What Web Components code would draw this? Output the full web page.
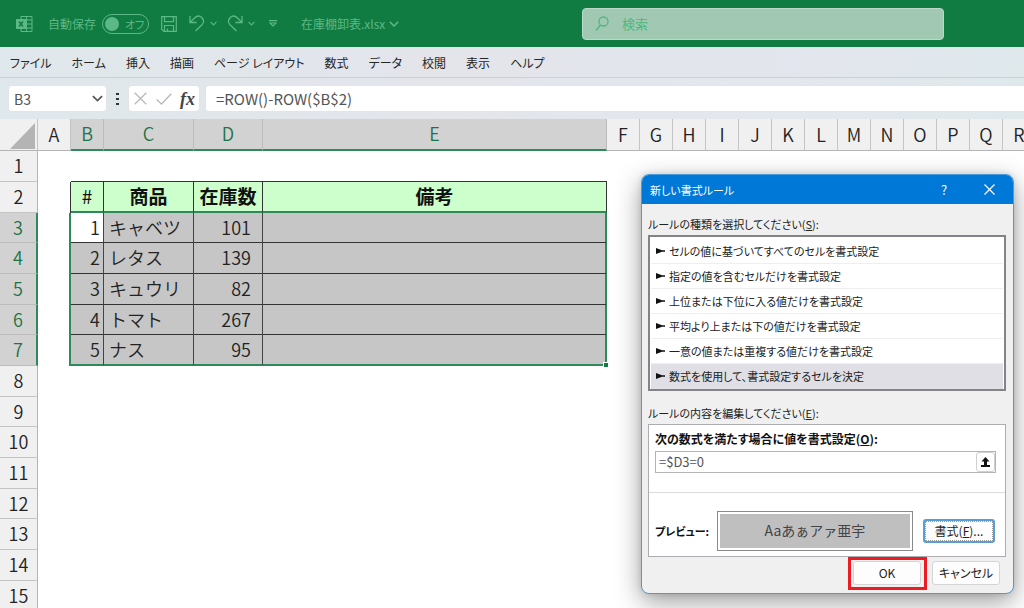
<!DOCTYPE html>
<html lang="ja">
<head>
<meta charset="utf-8">
<title>在庫棚卸表.xlsx</title>
<style>
html,body{margin:0;height:100%;overflow:hidden;background:#fff}
body{font-family:"Noto Sans CJK JP","Noto Sans",sans-serif;font-size:12px;color:#222}
</style>
</head>
<body>
<excel-app></excel-app>
<script>
const base = `*{box-sizing:border-box}
button,input{font:inherit;color:inherit;margin:0;padding:0;border:0;background:none;outline:0}
button{display:flex;align-items:center;justify-content:center}
svg{display:block;fill:none;stroke:currentColor;flex:none}`;

function define(name, css, html) {
  customElements.define(name, class extends HTMLElement {
    constructor() {
      super();
      const t = document.createElement('template');
      t.innerHTML = `<style>${base}${css}</style>${typeof html === 'function' ? html(this) : html}`;
      this.attachShadow({mode: 'open'}).append(t.content.cloneNode(true));
    }
  });
}
const chevron = (w, h) => `<svg width="${w}" height="${h}" viewBox="0 0 10 6" stroke-width="1.5"><path d="M.8.8 5 5 9.2.8"/></svg>`;

define('title-bar', `
:host{display:flex;align-items:center;height:47px;padding:0 80px 0 16px;background:#107c41;color:#5cb886;font-size:12px;font-feature-settings:"palt"}
.left{flex:1;display:flex;align-items:center;white-space:nowrap}
.app{margin-right:15px}
.auto{display:flex;align-items:center;gap:6px;margin-right:12px}
.switch{width:47px;height:20px;border:1px solid currentColor;border-radius:10px;justify-content:flex-start;gap:6px;padding-left:2px;font-size:11px}
.switch i{width:14px;height:14px;border-radius:50%;background:currentColor}
.undo,.redo{gap:5px;margin-left:12px}
.redo{margin-left:10px}
.custom{margin:0 24px 0 14px}
.file{gap:4px}
.search{flex:0 1 362px;display:flex;align-items:center;gap:13px;height:32px;padding-left:12px;background:#a0c8b2;border:1px solid #bcd8c8;border-radius:4px;color:#4fb880}
.search input{flex:1;min-width:0;font-size:13px}
.search input::placeholder{color:inherit;opacity:1}
`, `
<div class="left">
<svg class="app" width="17" height="16" viewBox="0 0 17 16" stroke-width="1"><path d="M5 3.500V.5h11v15H5v-3M10.500.5v15M5 4h11M10 8h6M5 12h11"/><path fill="currentColor" d="M.5 3.500h9v9h-9z"/><path stroke="#107c41" stroke-width="1.500" d="m3 5.500 4 5M7 5.500l-4 5"/></svg>
<div class="auto"><span id="as">自動保存</span><button class="switch" role="switch" aria-checked="false" aria-labelledby="as"><i></i>オフ</button></div>
<button aria-label="上書き保存"><svg width="16" height="16" viewBox="0 0 16 16" stroke-width="1.200"><path d="M.7.7h14.600v14.600H2.800L.7 13.200zM3.500.7v5h9v-5M3.500 15.300V9.500h9v5.800M6.500 15v-2.500"/></svg></button>
<button class="undo" aria-label="元に戻す"><svg width="16" height="17" viewBox="0 0 16 17" stroke-width="1.300"><path d="M1 1v6.500h6.500M1.300 7.200 5.500 3C8 .6 11 .8 13 2.700c2 2 2 5 0 7L6.500 16"/></svg>${chevron(7,5)}</button>
<button class="redo" aria-label="やり直し"><svg width="16" height="17" viewBox="0 0 16 17" stroke-width="1.300"><path d="M15 1v6.500H8.500M14.700 7.200 10.500 3C8 .6 5 .8 3 2.700c-2 2-2 5 0 7L9.500 16"/></svg>${chevron(7,5)}</button>
<button class="custom" aria-label="クイック アクセス ツール バーのカスタマイズ"><svg width="8" height="7" viewBox="0 0 8 7" stroke-width="1.100"><path d="M0 .6h8M1 3l3 3 3-3z"/></svg></button>
<button class="file">在庫棚卸表.xlsx${chevron(10,6)}</button>
</div>
<label class="search"><svg width="14" height="16" viewBox="0 0 14 16" stroke-width="1.300"><circle cx="8.500" cy="5.500" r="4.500"/><path d="M5.500 9 1 14.500"/></svg><input type="text" placeholder="検索" aria-label="検索"></label>`);

define('ribbon-tabs', `
:host{display:flex;align-items:center;gap:20px;height:31px;padding:0 10px;background:linear-gradient(90deg,#dfe8ec,#e3e5eb 40%,#e3e5ed 75%,#dfe9ec);border-bottom:1px solid #cbd0d5;font-size:12px;font-feature-settings:"palt";white-space:nowrap;color:#262626}
`, ['ファイル','ホーム','挿入','描画','ページ レイアウト','数式','データ','校閲','表示','ヘルプ'].map(t => `<button>${t}</button>`).join(''));

define('formula-bar', `
:host{display:flex;align-items:center;height:41px;padding:0 0 0 8px;background:linear-gradient(90deg,#dfe8ec,#e3e5eb 40%,#e3e7ee 75%,#dfe9ec);color:#555}
.box{display:flex;align-items:center;height:27px;background:#fff;border:1px solid #e2e4e6;border-radius:4px}
.name{width:99px;padding:0 3px 0 5px;font-size:14px}
.name input{flex:1;min-width:0}
.dots{margin:0 9px}
.fn{width:72px;padding:0 4px 0 5px;justify-content:space-between;color:#b8b8b8;margin-right:5px}
.fx{font:italic bold 18px/24px "Liberation Serif",serif;color:#444}
.formula{flex:1;padding-left:10px;border-right:0;border-radius:4px 0 0 4px;font-size:15px}
.formula input{flex:1}
`, `
<div class="box name"><input type="text" value="B3" aria-label="名前ボックス"><button aria-label="名前の一覧">${chevron(11,7)}</button></div>
<svg class="dots" width="3" height="12" viewBox="0 0 3 12" style="fill:#333;stroke:none"><path d="M0 0h3v2H0zM0 5h3v2H0zM0 10h3v2H0z"/></svg>
<div class="box fn">
<button aria-label="キャンセル"><svg width="13" height="13" viewBox="0 0 13 13" stroke-width="1.300"><path d="m.7.7 11.600 11.600M12.300.7.7 12.300"/></svg></button>
<button aria-label="入力"><svg width="16" height="12" viewBox="0 0 16 12" stroke-width="1.300"><path d="m.7 6.500 4.800 4.500L15.300.8"/></svg></button>
<button class="fx" aria-label="関数の挿入">fx</button></div>
<div class="box formula"><input type="text" value="=ROW()-ROW($B$2)" aria-label="数式バー"></div>`);

const cols = 'ABCDEFGHIJKLMNOPQR'.split('');
const heads = ['#','商品','在庫数','備考'];
const data = [[1,'キャベツ',101,''],[2,'レタス',139,''],[3,'キュウリ',82,''],[4,'トマト',267,''],[5,'ナス',95,'']];
function sheet() {
  let h = '<table><colgroup><col class="rh">' + cols.map(c => `<col class="c${c}">`).join('') + '</colgroup><thead><tr><th class="corner"><svg width="25" height="26" viewBox="0 0 25 26"><path fill="#b4b4b4" stroke="none" d="M25 0v26H0z"/></svg></th>';
  h += cols.map(c => `<th scope="col" class="${'BCDE'.includes(c) ? 'sel' : ''}">${c}</th>`).join('') + '</tr></thead><tbody>';
  for (let r = 1; r <= 15; r++) {
    const row = r === 2 ? heads : data[r - 3];
    h += `<tr class="${r === 2 ? 'head' : r > 2 && r < 8 ? 'data' : ''}${r === 1 ? 'top' : r === 7 ? ' last' : ''}"><th scope="row">${r}</th><td class="A"></td>`;
    if (row) h += row.map((v, i) => `<td class="${'BCDE'[i]}">${v}${r === 7 && i === 3 ? '<i></i>' : ''}</td>`).join('') + '<td colspan="13"></td>';
    else h += '<td class="E" colspan="4"></td><td colspan="13"></td>';
    h += '</tr>';
  }
  return h + '</tbody></table>';
}
define('work-sheet', `
:host{display:block;flex:1;min-height:0;overflow:hidden;background:#fff;font-size:18px;line-height:24px;color:#222}
table{table-layout:fixed;width:1036px;border-collapse:separate;border-spacing:0}
col{width:33px}.rh{width:38px}.cC{width:90px}.cD{width:69px}.cE{width:344px}
th,td{padding:0 0 2px;white-space:nowrap;font-weight:350}
th{background:#f0f0f0}
thead th{height:32px;border-right:1px solid #c4c4c4;border-bottom:1px solid #b4b4b4}
thead .sel{background:#d2d2d2;color:#217346;border-bottom:2px solid #2f8a5b;border-right-color:#bcbcbc}
thead .corner{padding:0}
.corner svg{margin:3px 0 0 10px}
tbody tr{height:31px}
tbody tr:nth-child(3n){height:30px}
tbody th{border-right:1px solid #b4b4b4;border-bottom:1px solid #c4c4c4}
.data th{background:#d2d2d2;color:#217346;border-right:2px solid #2f8a5b;border-bottom-color:#bcbcbc}
.top .E{border-bottom:1px solid #333}
.head .A{border-right:1px solid #333}
.head td:not(.A):not([colspan]){background:#cfc;border-right:1px solid #333;border-bottom:2px solid #2f8a5b;text-align:center;font-size:19px;font-weight:700;color:#111}
.head td.B:not(.A):not([colspan]){font-weight:400}
.data .A{border-right:2px solid #2f8a5b}
.data td:not(.A):not([colspan]){background:#c6c6c6;border-right:1px solid #444;border-bottom:1px solid #333}
.data .B,.data .D{text-align:right;padding-right:3px}
.data .D{padding-right:11px}
.data .C{padding-left:5px}
.data td.E:not(.A):not([colspan]){border-right:2px solid #2f8a5b;position:relative}
.head + .data td.B:not(.A):not([colspan]){background:#fff}
.data.last td:not(.A):not([colspan]){border-bottom:2px solid #2f8a5b}
.last i{position:absolute;right:-3px;bottom:-3px;width:5px;height:5px;background:#107c41;border:1px solid #fff;border-width:1px 0 0 1px}
`, sheet);

define('rule-option', `
:host{display:flex;align-items:center;gap:4px;height:25px;padding-left:5px;border-bottom:1px solid #efefef}
:host([aria-selected=true]){background:#e0dfe5;border-color:#e0dfe5}
`, `<svg width="9" height="6" viewBox="0 0 9 6"><path fill="#111" stroke="none" d="M0 0 6 2.300H9v1.400H6L0 6z"/></svg><slot></slot>`);

define('push-button', `
:host{display:block;position:relative}
button{width:100%;height:24px;background:#fdfdfd;border:1px solid #d5d5d5;border-radius:3px;white-space:nowrap;font-size:12px}
:host([focused]) button{border:2px solid #5a9fd4;outline:1px dotted #999;outline-offset:-3px}
:host([marked])::after{content:"";position:absolute;inset:-4px -6px -5px -5px;border:3px solid #ed1c24}
`, `<button><slot></slot></button>`);

define('rule-dialog', `
:host{display:block;position:absolute;top:174px;right:10px;width:373px;background:#f0f0f0;border:1px solid #4c9bd8;border-radius:8px;box-shadow:0 8px 26px rgba(0,0,0,.38),0 0 6px rgba(0,0,0,.12);font-size:11px;line-height:18px;font-feature-settings:"palt";color:#222}
header{display:flex;align-items:center;height:29px;padding:0 18px 0 8px;background:#0078d7;border-radius:7px 7px 0 0;color:#fff}
header span{flex:1}
.help{width:12px;margin-right:34px;font-size:13px}
main{padding:11px 7px 0 6px}
.cap{display:block;height:20px}
.list{background:#fff;border:2px solid #828488;padding:2px 1px;height:156px}
.cap2{display:block;margin-top:13px;height:20px}
.group{height:133px;background:#fff;border:1px solid #abadb3}
.edit{height:68px;padding:5px 9px 0 6px;border-bottom:1px solid #dcdcdc}
.edit label{display:block;height:21px;font-size:12px;font-weight:700;color:#111}
.ref{display:flex;height:22px;border:1px solid #b4b4b4;padding-left:3px;color:#555}
.ref input{flex:1;min-width:0;font-size:13px}
.ref button{width:19px;border:1px solid #d0d0d0;border-radius:3px;color:#111}
.preview{display:flex;align-items:center;padding:18px 10px 0 6px}
.preview b{width:62px;color:#111}
.sample{flex:1;height:40px;margin-right:10px;border:1px solid #8a8a8a;padding:2px}
.sample div{height:34px;background:#bfbfbf;text-align:center;font-size:14px;line-height:33px;font-feature-settings:normal;color:#444}
.preview push-button{width:72px}
footer{display:flex;justify-content:flex-end;gap:11px;padding:4px 13px 8px}
footer push-button{width:68px}
`, `
<header><span>新しい書式ルール</span><button class="help" aria-label="ヘルプ">?</button><button aria-label="閉じる"><svg width="11" height="11" viewBox="0 0 11 11" stroke-width="1.200"><path d="m.5.5 10 10M10.500.5l-10 10"/></svg></button></header>
<main>
<span class="cap" id="kind">ルールの種類を選択してください(<u>S</u>):</span>
<div class="list" role="listbox" aria-labelledby="kind">
${['セルの値に基づいてすべてのセルを書式設定','指定の値を含むセルだけを書式設定','上位または下位に入る値だけを書式設定','平均より上または下の値だけを書式設定','一意の値または重複する値だけを書式設定','数式を使用して、書式設定するセルを決定'].map((t, i) => `<rule-option role="option" aria-selected="${i === 5}">${t}</rule-option>`).join('')}
</div>
<span class="cap2">ルールの内容を編集してください(<u>E</u>):</span>
<div class="group">
<div class="edit"><label for="f">次の数式を満たす場合に値を書式設定(<u>O</u>):</label>
<div class="ref"><input id="f" type="text" value="=$D3=0"><button aria-label="範囲を選択"><svg width="9" height="11" viewBox="0 0 9 11"><path fill="#111" stroke="none" d="M4.500 0 8.500 4.500h-2.500V8H9v2H0V8h3V4.500H.5z"/></svg></button></div></div>
<div class="preview"><b>プレビュー:</b><div class="sample"><div>Aaあぁアァ亜宇</div></div><push-button focused>書式(<u>F</u>)...</push-button></div>
</div>
</main>
<footer><push-button marked>OK</push-button><push-button>キャンセル</push-button></footer>`);

define('excel-app', `
:host{display:flex;flex-direction:column;height:100vh;position:relative;overflow:hidden}
title-bar,ribbon-tabs,formula-bar{flex:none}
`, `<title-bar></title-bar><ribbon-tabs></ribbon-tabs><formula-bar></formula-bar><work-sheet></work-sheet><rule-dialog></rule-dialog>`);
</script>
</body>
</html>
